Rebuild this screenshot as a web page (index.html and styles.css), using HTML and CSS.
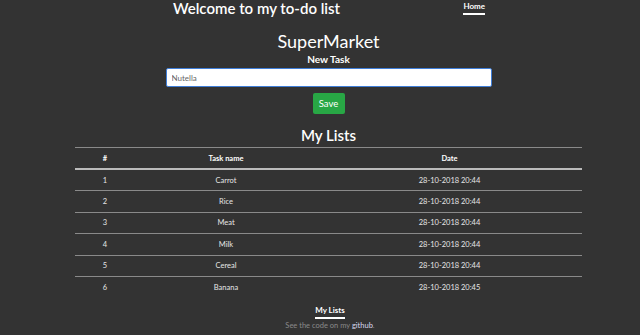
FILE: index.html
```html
<!DOCTYPE html>
<html lang="en">

<head>
    <meta charset="UTF-8">
    <meta name="viewport" content="width=device-width, initial-scale=1.0">
    <title>To-do list</title>
    <link rel="stylesheet" href="styles.css">
</head>

<body>
    <header class="topbar">
        <div class="topbar-inner">
            <h1 class="site-title">Welcome to my to-do list</h1>
            <nav class="nav">
                <a class="nav-link active" href="#">Home</a>
            </nav>
        </div>
    </header>

    <main class="content">
        <h2 class="list-title">SuperMarket</h2>

        <form class="task-form">
            <label class="form-label" for="task">New Task</label>
            <input class="task-input" id="task" type="text" value="Nutella">
            <button class="btn-save" type="button">Save</button>
        </form>

        <h3 class="section-title">My Lists</h3>

        <table class="tasks">
            <thead>
                <tr>
                    <th class="col-num">#</th>
                    <th class="col-name">Task name</th>
                    <th class="col-date">Date</th>
                </tr>
            </thead>
            <tbody>
                <tr><td>1</td><td>Carrot</td><td>28-10-2018 20:44</td></tr>
                <tr><td>2</td><td>Rice</td><td>28-10-2018 20:44</td></tr>
                <tr><td>3</td><td>Meat</td><td>28-10-2018 20:44</td></tr>
                <tr><td>4</td><td>Milk</td><td>28-10-2018 20:44</td></tr>
                <tr><td>5</td><td>Cereal</td><td>28-10-2018 20:44</td></tr>
                <tr><td>6</td><td>Banana</td><td>28-10-2018 20:45</td></tr>
            </tbody>
        </table>
    </main>

    <footer class="footer">
        <a class="footer-link" href="#">My Lists</a>
        <p class="footer-note">See the code on my <a href="#">github</a>.</p>
    </footer>
</body>

</html>
```

FILE: styles.css
```css
body {
    margin: 0;
    background: #333333;
    color: #ffffff;
    font-family: Lato, "Open Sans", sans-serif;
}

.topbar {
    height: 22px;
}

.topbar-inner {
    display: flex;
    justify-content: space-between;
    align-items: flex-start;
    width: 312px;
    margin-left: 173px;
}

.site-title {
    margin: 0;
    font-size: 15px;
    font-weight: 600;
    line-height: 17px;
}

.nav-link {
    display: block;
    color: #ffffff;
    text-decoration: none;
    font-size: 8px;
    font-weight: 700;
    line-height: 11px;
    padding-top: 1px;
    padding-bottom: 1px;
    border-bottom: 2px solid #ffffff;
}

.content {
    width: 507px;
    margin-left: 75px;
}

.list-title {
    margin: 7px 0 0;
    text-align: center;
    font-size: 18px;
    font-weight: 400;
    line-height: 24px;
}

.task-form {
    display: flex;
    flex-direction: column;
    align-items: center;
}

.form-label {
    font-size: 10px;
    font-weight: 700;
    line-height: 13px;
}

.task-input {
    box-sizing: border-box;
    width: 326px;
    height: 19px;
    margin-top: 2px;
    padding: 0 5px;
    border: 1px solid #3f7ed8;
    border-radius: 2px;
    background: #ffffff;
    color: #666666;
    font-family: Lato, sans-serif;
    font-size: 8px;
}

.btn-save {
    width: 32px;
    height: 21px;
    margin-top: 6px;
    padding: 0;
    border: none;
    border-radius: 2px;
    background: #28a745;
    color: #ffffff;
    font-family: Lato, sans-serif;
    font-size: 9.5px;
}

.section-title {
    margin: 12px 0 3px;
    text-align: center;
    font-size: 15px;
    font-weight: 600;
    line-height: 18px;
}

.tasks {
    width: 100%;
    border-collapse: collapse;
    font-size: 7.5px;
}

.tasks th,
.tasks td {
    text-align: center;
    padding: 0;
    height: 20.4px;
    border-bottom: 1px solid #8a8a8a;
}

.tasks thead th {
    border-top: 1px solid #8a8a8a;
    border-bottom: 2px solid #bbbbbb;
    font-weight: 700;
    height: 20px;
}

.tasks tbody tr:last-child td {
    border-bottom: none;
}

.tasks td {
    color: #e6e6e6;
}

.col-num {
    width: 60px;
}

.col-name {
    width: 182px;
}

.footer {
    display: flex;
    flex-direction: column;
    align-items: center;
    padding-left: 20px;
    margin-top: 8px;
}

.footer-link {
    color: #ffffff;
    text-decoration: none;
    font-size: 8px;
    font-weight: 700;
    line-height: 11px;
    padding-bottom: 1px;
    border-bottom: 2px solid #ffffff;
}

.footer-note {
    margin: 2px 0 0;
    font-size: 7.5px;
    color: #8a8a8a;
}

.footer-note a {
    color: #d8d8ee;
    text-decoration: none;
}
```
